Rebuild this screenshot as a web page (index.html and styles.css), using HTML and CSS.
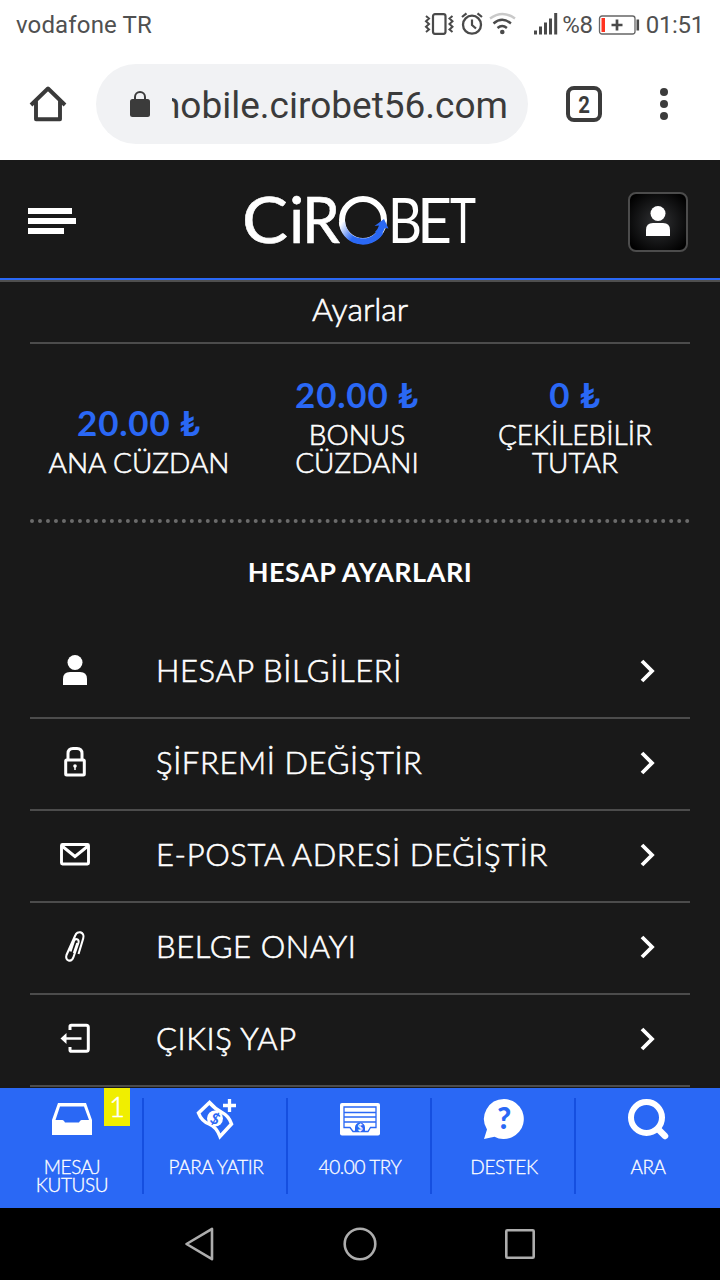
FILE: index.html
```
<!DOCTYPE html>
<html lang="tr">
<head>
    <meta charset="UTF-8">
    <meta name="viewport" content="width=device-width, initial-scale=1.0">
    <title>Cirobet - Ayarlar</title>
    <link rel="stylesheet" href="styles.css">
</head>
<body>
    <div class="status-bar">
        <span class="carrier">vodafone TR</span>
        <div class="status-icons">
            <svg class="icon-system" width="136" height="26" viewBox="0 0 136 26">
                <!-- vibrate -->
                <rect x="9" y="2.2" width="12.5" height="19.6" rx="2" fill="none" stroke="#4a4a4a" stroke-width="2.2"/>
                <path d="M2 4l3 2.5-3 2.8 3 2.7-3 2.7 3 2.8L2 20M28.500 4l-3 2.500 3 2.800-3 2.700 3 2.700-3 2.800 3 2.500" fill="none" stroke="#4a4a4a" stroke-width="2"/>
                <!-- alarm -->
                <circle cx="48" cy="12.700" r="9" fill="none" stroke="#4a4a4a" stroke-width="2.300"/>
                <path d="M48 7.500v5.500l4 3.500M38 5l4.500-3.700M58 5l-4.500-3.700" fill="none" stroke="#4a4a4a" stroke-width="2.200"/>
                <!-- wifi -->
                <path d="M66 6.500q12.500-9 25 0" fill="none" stroke="#c9c9c9" stroke-width="2.500"/>
                <path d="M69.500 11.500q8.700-7.500 17.400 0M73.500 16q4.700-4 9.400 0" fill="none" stroke="#4a4a4a" stroke-width="2.400"/>
                <circle cx="78.300" cy="20" r="2.300" fill="#4a4a4a"/>
                <!-- signal -->
                <path d="M111.500 22.500v-4M116.500 22.500v-8M121.500 22.500v-12M126.500 22.500v-16M131.700 22.500V1" fill="none" stroke="#4a4a4a" stroke-width="3"/>
            </svg>
            <span class="battery-level">%8</span>
            <svg class="icon-battery" width="42" height="22" viewBox="0 0 42 22">
                <rect x="1.500" y="2" width="35.500" height="18" rx="2.500" fill="none" stroke="#666" stroke-width="1.300"/>
                <rect x="3.500" y="4" width="3.500" height="14" fill="#ff3320"/>
                <path d="M13.500 11h11M19 5.500v11" stroke="#4a4a4a" stroke-width="2.700"/>
                <path d="M39.800 5.500v11" stroke="#4a4a4a" stroke-width="2.600"/>
            </svg>
            <span class="clock">01:51</span>
        </div>
    </div>

    <div class="browser-bar">
        <svg class="icon-home" width="36" height="36" viewBox="0 0 36 36">
            <path d="M1 19L18 2.500 35 19M6 15v18.300h24V15" fill="none" stroke="#3a3a3a" stroke-width="3.900" stroke-linejoin="round"/>
        </svg>
        <div class="address">
            <svg width="20" height="26" viewBox="0 0 20 26">
                <rect x="0" y="8" width="20" height="18" rx="2.500" fill="#3b3b3b"/>
                <path d="M5 9V6a5 5 0 0 1 10 0v3" fill="none" stroke="#3b3b3b" stroke-width="2"/>
            </svg>
            <div class="address-text"><span>mobile.cirobet56.com</span></div>
        </div>
        <div class="tab-count"><span>2</span></div>
        <div class="browser-menu"><i></i><i></i><i></i></div>
    </div>

    <header class="header">
        <div class="menu-button"><i></i><i></i><i></i></div>
        <svg class="logo" width="236" height="56" viewBox="0 0 236 56">
            <defs>
                <linearGradient id="ring" x1="0" y1="0" x2="1" y2="0.350">
                    <stop offset="0" stop-color="#fff"/>
                    <stop offset="0.500" stop-color="#2a68f5"/>
                </linearGradient>
            </defs>
            <text class="logo-bold" x="0" y="51" textLength="46" lengthAdjust="spacingAndGlyphs">C</text>
            <text class="logo-bold" x="47" y="51">i</text>
            <text class="logo-bold" x="60" y="51" textLength="38" lengthAdjust="spacingAndGlyphs">R</text>
            <circle cx="121" cy="28" r="21" fill="none" stroke="#fff" stroke-width="6"/>
            <path d="M100 30a21 21 0 0 0 38.500 10" fill="none" stroke="url(#ring)" stroke-width="6.300"/>
            <path d="M132.500 34l9.500-7 4.500 9.500-3.500-.5q-2 5-5 8l-5-4q3-3 4-6.500z" fill="#2a68f5"/>
            <text class="logo-thin" x="146" y="51" textLength="34" lengthAdjust="spacingAndGlyphs">B</text>
            <text class="logo-thin" x="175" y="51" textLength="35" lengthAdjust="spacingAndGlyphs">E</text>
            <text class="logo-thin" x="208" y="51" textLength="26" lengthAdjust="spacingAndGlyphs">T</text>
        </svg>
        <div class="profile-button">
            <svg width="24" height="30" viewBox="0 0 24 30">
                <circle cx="12" cy="7.500" r="7.500"/>
                <path d="M0 30v-6q0-7 7-7h10q7 0 7 7v6z"/>
            </svg>
        </div>
    </header>

    <main class="content">
        <h1 class="page-title">Ayarlar</h1>

        <section class="wallets">
            <div class="wallet">
                <b>20.00 ₺</b>
                <span>ANA CÜZDAN</span>
            </div>
            <div class="wallet">
                <b>20.00 ₺</b>
                <span>BONUS<br>CÜZDANI</span>
            </div>
            <div class="wallet">
                <b>0 ₺</b>
                <span>ÇEKİLEBİLİR<br>TUTAR</span>
            </div>
        </section>

        <h2 class="section-title">HESAP AYARLARI</h2>

        <ul class="settings">
            <li>
                <svg class="row-icon" width="32" height="32" viewBox="0 0 32 32">
                    <circle cx="16" cy="8.500" r="7.500" fill="#fff"/>
                    <path d="M4 31v-6q0-7 7-7h10q7 0 7 7v6z" fill="#fff"/>
                </svg>
                <span>HESAP BİLGİLERİ</span>
                <svg class="chevron" width="16" height="24" viewBox="0 0 16 24"><path d="M2 2l10 10L2 22"/></svg>
            </li>
            <li>
                <svg class="row-icon" width="32" height="32" viewBox="0 0 32 32">
                    <rect x="6.700" y="14" width="18.600" height="15" rx="1" fill="none" stroke="#fff" stroke-width="3"/>
                    <path d="M9 13V7.500q0-5 5-5h4q5 0 5 5V13" fill="none" stroke="#fff" stroke-width="3"/>
                    <circle cx="16" cy="20" r="1.800" fill="#fff"/>
                    <path d="M16 20v4" stroke="#fff" stroke-width="1.500"/>
                </svg>
                <span>ŞİFREMİ DEĞİŞTİR</span>
                <svg class="chevron" width="16" height="24" viewBox="0 0 16 24"><path d="M2 2l10 10L2 22"/></svg>
            </li>
            <li>
                <svg class="row-icon" width="32" height="32" viewBox="0 0 32 32">
                    <rect x="2.500" y="6.500" width="27" height="19.500" rx="1" fill="none" stroke="#fff" stroke-width="2.900"/>
                    <path d="M3 8l13 10.500L29 8" fill="none" stroke="#fff" stroke-width="3"/>
                </svg>
                <span>E-POSTA ADRESİ DEĞİŞTİR</span>
                <svg class="chevron" width="16" height="24" viewBox="0 0 16 24"><path d="M2 2l10 10L2 22"/></svg>
            </li>
            <li>
                <svg class="row-icon" width="32" height="32" viewBox="0 0 32 32">
                    <path d="M19.500 24l4.700-15.500c2-6.500-6-9-8.200-2.500L7.500 25c-2 6 5 8 7 2l5-14.500c1-3.500-3.500-4.500-4.500-1.500L11.500 21.500M14.800 23l3.500-10" fill="none" stroke="#fff" stroke-width="2.100"/>
                </svg>
                <span>BELGE ONAYI</span>
                <svg class="chevron" width="16" height="24" viewBox="0 0 16 24"><path d="M2 2l10 10L2 22"/></svg>
            </li>
            <li>
                <svg class="row-icon" width="32" height="32" viewBox="0 0 32 32">
                    <path d="M11 8V4.500q0-1.300 1.300-1.300h15q2 0 2 2v22q0 2-2 2h-15q-1.300 0-1.300-1.300V25" fill="none" stroke="#fff" stroke-width="3"/>
                    <path d="M6 16.500h16.500" stroke="#fff" stroke-width="2.500"/>
                    <path d="M1.500 16.500l6-5.500v11z" fill="#fff"/>
                </svg>
                <span>ÇIKIŞ YAP</span>
                <svg class="chevron" width="16" height="24" viewBox="0 0 16 24"><path d="M2 2l10 10L2 22"/></svg>
            </li>
        </ul>
    </main>

    <nav class="bottom-nav">
        <div class="nav-item">
            <svg width="42" height="42" viewBox="0 0 42 42">
                <path fill-rule="evenodd" d="M1 22L7 5h28l6 17v15H1zM4.500 22h7q1.500 0 2.500 2.500h14q1-2.500 2.500-2.500h7.500L33 8.500H9z" fill="#fff"/>
            </svg>
            <span>MESAJ<br>KUTUSU</span>
            <div class="badge">1</div>
        </div>
        <div class="nav-item">
            <svg width="42" height="42" viewBox="0 0 42 42">
                <path d="M14.500 4.500L3.500 15q3 8 10.500 11t11 12.500L36.500 26Q34 18 27 14.500T14.500 4.500z" fill="none" stroke="#fff" stroke-width="3.500"/>
                <circle cx="20" cy="20.500" r="8" fill="#fff"/>
                <text x="20" y="26" class="coin" transform="rotate(25 20 20.500)">$</text>
                <path d="M34.500 1v13M28 7.500h13" stroke="#fff" stroke-width="3.300"/>
            </svg>
            <span>PARA YATIR</span>
        </div>
        <div class="nav-item">
            <svg width="42" height="42" viewBox="0 0 42 42">
                <rect x="1" y="5" width="40" height="32.500" rx="2" fill="#fff"/>
                <path d="M5 9h32v20.500h-5.500l-2.500 4H14l-3-4H5zM5 14.500h32M5 19h32M5 24h32" fill="none" stroke="#2a68f5" stroke-width="1.300"/>
                <path d="M16 33.500v-4a5 5 0 0 1 10 0v4z" fill="#2a68f5"/>
                <text x="21" y="33" class="coin-small">$</text>
            </svg>
            <span>40.00 TRY</span>
        </div>
        <div class="nav-item">
            <svg width="42" height="42" viewBox="0 0 42 42">
                <path d="M21 1a20 20 0 1 1-9.500 37.700L1 41l3-9.500A20 20 0 0 1 21 1z" fill="#fff"/>
                <text x="21" y="31" class="question">?</text>
            </svg>
            <span>DESTEK</span>
        </div>
        <div class="nav-item">
            <svg width="42" height="42" viewBox="0 0 42 42">
                <circle cx="19.500" cy="19.500" r="15.500" fill="none" stroke="#fff" stroke-width="6"/>
                <path d="M31 31l7 7" stroke="#fff" stroke-width="6.500" stroke-linecap="round"/>
            </svg>
            <span>ARA</span>
        </div>
    </nav>

    <div class="system-bar">
        <svg width="32" height="36" viewBox="0 0 32 36"><path d="M2.500 18L28 2.800v30.400z"/></svg>
        <svg width="36" height="36" viewBox="0 0 36 36"><circle cx="18" cy="18" r="15.300"/></svg>
        <svg width="32" height="36" viewBox="0 0 32 36"><rect x="2.300" y="4.300" width="27.400" height="27.400" rx="1"/></svg>
    </div>
</body>
</html>
```
FILE: styles.css
```
* {
    box-sizing: border-box;
}

body {
    margin: 0;
    width: 720px;
    height: 1280px;
    display: flex;
    flex-direction: column;
    overflow: hidden;
    background: #191919;
    color: #fff;
    font-family: Lato, 'Liberation Sans', sans-serif;
}

svg {
    display: block;
    flex-shrink: 0;
    overflow: visible;
}

/* Android status bar */
.status-bar {
    height: 50px;
    padding: 0 16px;
    display: flex;
    align-items: center;
    justify-content: space-between;
    background: #fff;
    color: #505050;
    font-family: Roboto, sans-serif;
    font-size: 24px;
}

.carrier {
    letter-spacing: 0.15px;
}

.status-icons {
    display: flex;
    align-items: center;
}

.battery-level {
    margin: 0 5px 0 2px;
    letter-spacing: -0.3px;
}

.clock {
    margin-left: 6px;
    letter-spacing: -0.3px;
}

/* Chrome toolbar */
.browser-bar {
    height: 110px;
    padding: 0 50px 2px 30px;
    display: flex;
    align-items: center;
    background: #fff;
    font-family: Roboto, sans-serif;
    color: #3b3b3b;
}

.address {
    width: 432px;
    height: 80px;
    margin: 0 38px 0 30px;
    padding: 0 20px 0 34px;
    display: flex;
    align-items: center;
    gap: 22px;
    border-radius: 40px;
    background: #f1f2f4;
}

.address-text {
    flex: 1;
    display: flex;
    justify-content: flex-end;
    padding-top: 3px;
    overflow: hidden;
    font-size: 37px;
    white-space: nowrap;
}

.tab-count {
    width: 36px;
    height: 36px;
    border: 4px solid #3b3b3b;
    border-radius: 8px;
    font-size: 24px;
    font-weight: bold;
    line-height: 30px;
    text-align: center;
}

.tab-count span {
    display: block;
    transform: scaleX(0.85);
}

.browser-menu {
    margin-left: 58px;
    display: flex;
    flex-direction: column;
    gap: 4px;
}

.browser-menu i {
    width: 8px;
    height: 8px;
    border-radius: 50%;
    background: #3b3b3b;
}

/* Site header */
.header {
    height: 122px;
    padding: 4px 32px 0 28px;
    display: flex;
    align-items: center;
    justify-content: space-between;
    border-bottom: 2px solid #4f4f4f;
    box-shadow: inset 0 -2px #2a68f5;
}

.menu-button {
    width: 60px;
    margin-bottom: 2px;
    display: flex;
    flex-direction: column;
    gap: 4px;
}

.menu-button i {
    width: 44px;
    height: 6px;
    background: #fff;
}

.menu-button i:nth-child(2) {
    width: 48px;
}

.menu-button i:nth-child(3) {
    width: 36px;
}

.logo {
    margin: 0 0 4px 4px;
}

.logo-bold {
    font-size: 64px;
    font-weight: 400;
    fill: #fff;
    stroke: #fff;
    stroke-width: 0.6px;
}

.logo-thin {
    font-size: 61px;
    fill: #fff;
}

.profile-button {
    width: 60px;
    height: 60px;
    display: flex;
    align-items: center;
    justify-content: center;
    padding: 0 0 2px;
    border: 2px solid #4c4c4c;
    border-radius: 8px;
    background: radial-gradient(#292a2c 15%, #000 90%);
    fill: #fff;
}

/* Settings page */
.content {
    flex: 1;
    padding: 0 30px;
    overflow: hidden;
}

.page-title {
    margin: 0;
    height: 62px;
    border-bottom: 2px solid #4c4c4c;
    font-size: 32px;
    font-weight: 300;
    line-height: 53px;
    text-align: center;
    -webkit-text-stroke: 0.6px #fff;
}

.wallets {
    height: 179px;
    padding: 0 6px 43px 0;
    display: grid;
    grid-template-columns: repeat(3, 1fr);
    align-items: end;
    border-bottom: 4px dotted #6b6b6b;
    text-align: center;
}

.wallet b {
    display: block;
    margin-bottom: 6px;
    font-size: 35px;
    line-height: 40px;
    letter-spacing: 0.8px;
    color: #2a68f5;
}

.wallet span {
    display: block;
    font-size: 28px;
    font-weight: 300;
    line-height: 28px;
    -webkit-text-stroke: 0.6px #fff;
}

.section-title {
    margin: 0;
    height: 104px;
    font-size: 27px;
    line-height: 98px;
    letter-spacing: 0.5px;
    text-align: center;
}

.settings {
    margin: 0;
    padding: 0;
    list-style: none;
}

.settings li {
    height: 92px;
    padding: 0 34px 2px 29px;
    display: flex;
    align-items: center;
    border-bottom: 2px solid #4c4c4c;
    font-size: 31px;
    font-weight: 300;
    letter-spacing: 0.6px;
}

.settings span {
    flex: 1;
    margin: 0 0 2px 65px;
    white-space: nowrap;
    -webkit-text-stroke: 0.6px #fff;
}

.row-icon {
    margin-bottom: 2px;
}

.chevron {
    fill: none;
    stroke: #fff;
    stroke-width: 3.8px;
}

/* Bottom navigation */
.bottom-nav {
    height: 120px;
    display: grid;
    grid-template-columns: repeat(5, 144px);
    background: #2a68f5;
}

.nav-item {
    position: relative;
    margin: 10px 0 14px;
    padding-left: 2px;
    display: flex;
    flex-direction: column;
    align-items: center;
    border-right: 2px solid #154fe0;
    font-size: 19px;
    font-weight: 300;
    line-height: 18px;
    letter-spacing: -0.4px;
    text-align: center;
}

.nav-item:last-child {
    border-right-color: transparent;
}

.nav-item span {
    margin-top: 18px;
    -webkit-text-stroke: 0.3px #fff;
}

.badge {
    position: absolute;
    top: -10px;
    left: 104px;
    width: 26px;
    height: 38px;
    background: #f0ee00;
    font-size: 27px;
    line-height: 37px;
    -webkit-text-stroke: 0.5px #fff;
}

.coin,
.coin-small,
.question {
    fill: #2a68f5;
    font-weight: bold;
    text-anchor: middle;
}

.coin {
    font-size: 15px;
}

.coin-small {
    fill: #fff;
    font-size: 9px;
}

.question {
    font-size: 30px;
    font-weight: 900;
}

/* Android navigation keys */
.system-bar {
    height: 72px;
    padding: 0 184px;
    display: flex;
    align-items: center;
    justify-content: space-between;
    background: #000;
}

.system-bar svg {
    fill: none;
    stroke: #adadad;
    stroke-width: 2.6px;
    stroke-linejoin: round;
}
```
